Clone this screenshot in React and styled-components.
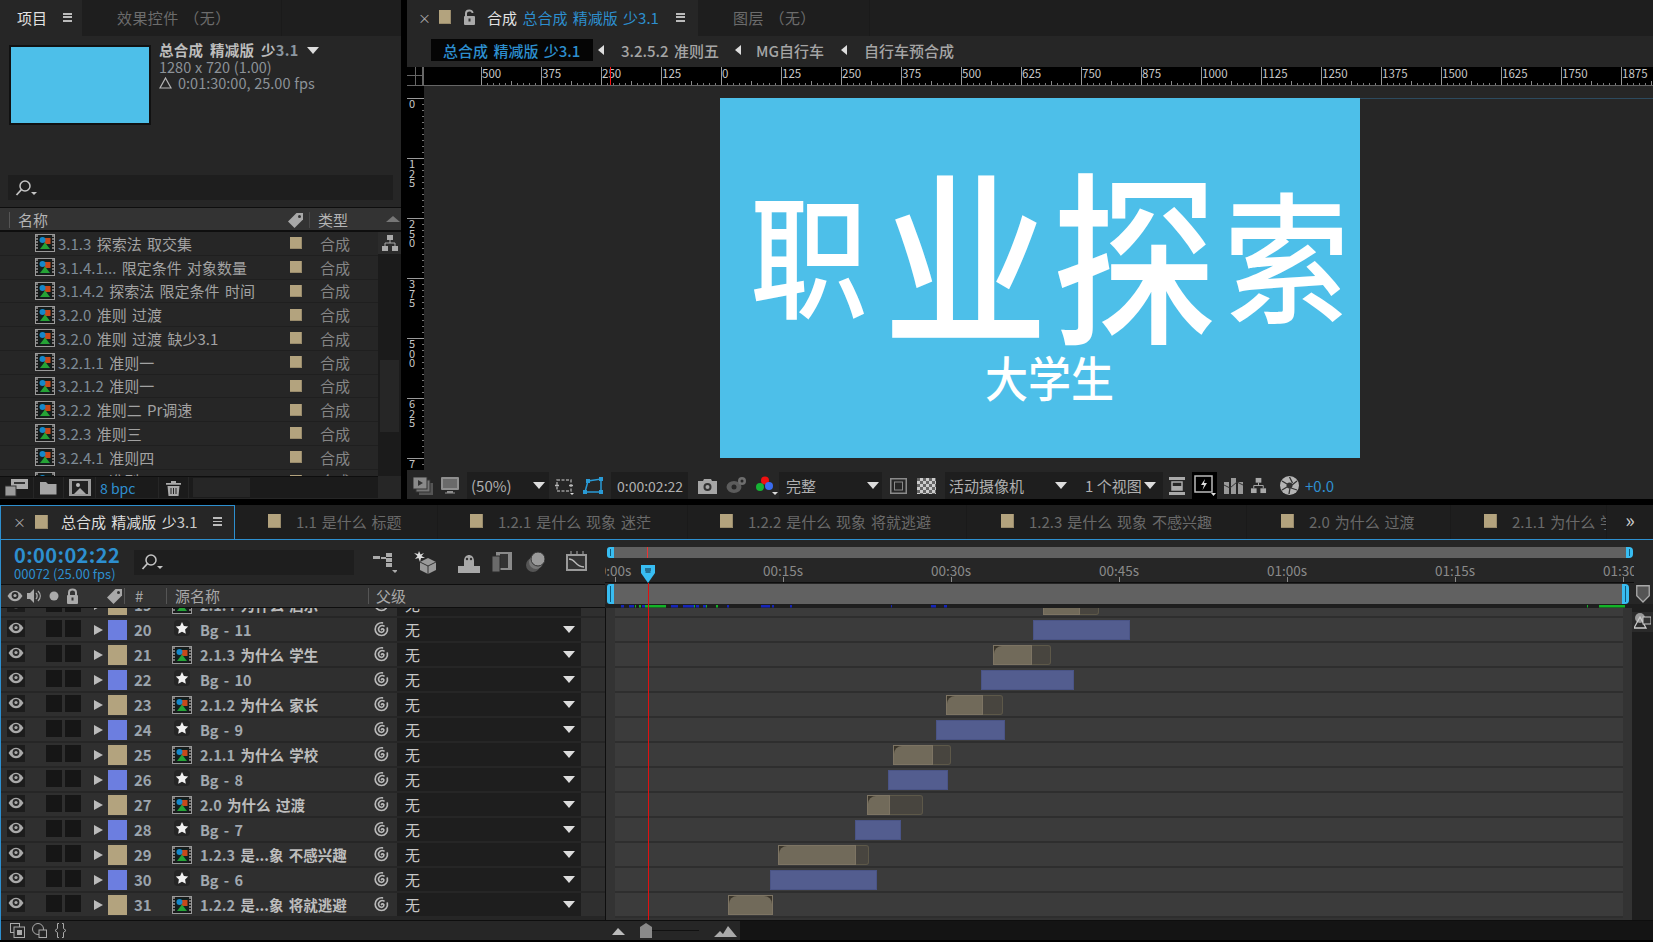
import React from 'react';
import styled, { createGlobalStyle } from 'styled-components';

const Global = createGlobalStyle`
  html, body { margin: 0; padding: 0; background: #000; }
  * { box-sizing: border-box; }
  body { font-family: "Noto Sans CJK SC", "Noto Sans", sans-serif; font-size: 15px; color: #aaa; word-spacing: 2px; }
`;

const BLUE = '#2d8fcf';
const CYAN = '#38bdf2';
const TAN = '#b3a37e';
const PERI = '#6c7ee0';

/* ---------- page ---------- */
const Page = styled.div`
  width: 1653px; height: 942px; background: #000; overflow: hidden;
  display: flex; flex-direction: column;
`;
const TopArea = styled.div`
  height: 499px; margin-bottom: 6px; display: grid; grid-template-columns: 401px 1246px; column-gap: 6px;
`;
const Panel = styled.section`
  background: #262626; height: 100%; display: flex; flex-direction: column; min-width: 0; overflow: hidden;
`;

/* ---------- tabs ---------- */
const TabStrip = styled.div`
  height: 36px; flex: none; display: flex; align-items: stretch; background: #1e1e1e; overflow: hidden;
`;
const ActiveTab = styled.div`
  width: ${p => p.$w}px; flex: none; background: #262626; display: flex; align-items: center;
  padding: 0 0 2px ${p => p.$pad}px; color: #e2e2e2; white-space: nowrap;
`;
const GhostTab = styled.div`
  flex: none; width: ${p => p.$w}px; padding: 0 0 2px ${p => p.$pad}px; display: flex; align-items: center;
  color: #6c6c6c; white-space: nowrap; border-right: 1px solid #1a1a1a; letter-spacing: .4px;
`;
const MenuIcon = styled.span`
  width: 9px; height: 9px; flex: none; margin-left: ${p => p.$ml}px;
  background: repeating-linear-gradient(180deg, #bbb 0 2px, transparent 2px 3.5px);
`;
const Swatch = styled.span`
  display: block; flex: none; width: ${p => p.$w || 12}px; height: ${p => p.$h || 12}px; background: ${p => p.$c || TAN};
  box-shadow: inset -1px -1px 0 rgba(0,0,0,.15);
`;
const Blue = styled.span` color: ${BLUE}; `;
const CloseX = styled.span` color: #aaa; font-size: 13px; width: ${p => p.$w}px; flex: none; `;

/* ---------- project panel ---------- */
const Info = styled.div`
  height: 139px; flex: none; display: flex; padding: 9px 0 0 9px;
`;
const Thumb = styled.div`
  width: 142px; height: 80px; background: #4dbfe9; border: 2px solid #111; flex: none;
`;
const Meta = styled.div`
  margin-left: 8px; font-size: 14.5px; line-height: 16.5px; color: #8c9298; margin-top: -3px; word-spacing: .5px;
`;
const MetaTitle = styled.div`
  font-weight: 700; color: #bdbdbd; display: flex; align-items: center; gap: 8px; white-space: nowrap; word-spacing: 3px; letter-spacing: .3px;
`;
const MetaLine = styled.div` display: flex; align-items: center; gap: 6px; white-space: nowrap; `;
const SearchBox = styled.div`
  width: ${p => p.$w}px; height: ${p => p.$h}px; margin-left: ${p => p.$ml}px; background: #1e1e1e; flex: none;
  display: flex; align-items: center; padding-left: 7px;
`;
const ProjectHeader = styled.div`
  margin-top: 7px; height: 25px; flex: none; background: #333; border-top: 1px solid #0e0e0e; border-bottom: 2px solid #0e0e0e;
  display: flex; align-items: center; color: #b4b4b4; position: relative; padding-top: 1px;
`;
const HeadName = styled.span` margin-left: 9px; padding-left: 8px; width: 278px; flex: none; border-left: 1px solid #555; line-height: 16px; `;
const HeadType = styled.span` margin-left: 5px; padding-left: 8px; border-left: 1px solid #484848; line-height: 16px; `;
const SortCaret = styled.span`
  position: absolute; right: 1px; top: 8px; width: 0; height: 0;
  border-left: 7px solid transparent; border-right: 7px solid transparent; border-bottom: 6px solid #777;
`;
const ProjectBody = styled.div` height: 244px; flex: none; display: flex; overflow: hidden; `;
const ProjectList = styled.div` width: 378px; flex: none; overflow: hidden; `;
const ProjectRow = styled.div`
  height: 23.75px; display: flex; align-items: center; padding-left: 35px; border-bottom: 1px solid #1f1f1f;
  color: #a2a2a2; white-space: nowrap; overflow: hidden;
`;
const ProjectName = styled.span` width: 232px; flex: none; margin-left: 3px; `;
const Latin = styled.span` color: ${p => p.$c || '#7f8b96'}; `;
const TypeText = styled.span` margin-left: 18px; color: #858585; `;
const Rail = styled.div`
  width: 23px; flex: none; background: #1b1b1b; display: flex; flex-direction: column; align-items: center;
`;
const RailTop = styled.div` width: 100%; height: 22px; background: #2b2b2b; display: flex; justify-content: center; align-items: center; `;
const Thumbbar = styled.div` width: 19px; height: 72px; background: #262626; margin-top: 106px; `;
const ProjectBar = styled.div`
  height: 22px; flex: none; display: flex; align-items: center; background: #262626;
`;
const ProjectTools = styled.div`
  width: 378px; height: 100%; background: #1b1b1b; display: flex; align-items: center; border-top: 1px solid #0e0e0e;
`;
const ToolSlot = styled.div`
  flex: none; height: 100%; width: ${p => p.$w}px; display: flex; align-items: center; justify-content: center;
  border-right: 1px solid #262626;
`;
const BpcSlot = styled.div`
  flex: none; height: 100%; width: 63px; display: flex; align-items: center; padding-left: 4px;
  border-right: 1px solid #262626; color: #2f8fd0; white-space: nowrap; font-size: 14px; word-spacing: 0;
`;
const FieldBox = styled.div` width: 57px; height: 19px; margin-left: 4px; background: #262626; `;

/* ---------- viewer ---------- */
const Crumbs = styled.div`
  height: 30px; flex: none; display: flex; align-items: center; color: #a5a5a5; white-space: nowrap; font-weight: 500;
  padding-bottom: 2px;
`;
const CrumbActive = styled.div`
  width: 162px; height: 22px; margin-left: 24px; background: #050505; color: ${BLUE}; display: flex; align-items: center;
  padding-left: 12px;
`;
const CrumbArrow = styled.span`
  width: 0; height: 0; flex: none; margin-left: ${p => p.$ml}px;
  border-top: 5px solid transparent; border-bottom: 5px solid transparent; border-right: 6px solid #ddd;
`;
const CrumbText = styled.span` margin-left: ${p => p.$ml}px; `;
const TopRuler = styled.div`
  height: 19px; margin-top: 1px; flex: none; background: #000; display: flex; position: relative;
  border-bottom: 1px solid #666; overflow: hidden;
`;
const RulerCorner = styled.div`
  width: 17px; flex: none; border-right: 2px solid #666; position: relative; margin-right: 57px;
  background: linear-gradient(#666,#666) 0 8px/100% 1px no-repeat, linear-gradient(#666,#666) 8px 0/1px 100% no-repeat;
`;
const RulerCell = styled.div`
  width: 60px; flex: none; border-left: 1px solid #999; font-size: 11.5px; line-height: 12px; color: #c8c8c8;
  background:
    linear-gradient(#888,#888) 29px 100%/1px 4px no-repeat,
    repeating-linear-gradient(90deg, #777 0 1px, transparent 1px 6px) 5px 100%/100% 2px no-repeat;
`;
const RedMark = styled.i` position: absolute; left: 203px; top: 0; width: 1px; height: 19px; background: #f11; `;
const Stage = styled.div` height: 384px; flex: none; display: flex; border-bottom: 0; `;
const SideRuler = styled.div`
  width: 17px; flex: none; background: #000; padding-top: 12px; overflow: hidden;
`;
const SideCell = styled.div`
  height: 60px; border-top: 1px solid #999; font-size: 11px; line-height: 9.5px; color: #c8c8c8; padding: 0 0 0 2px; width: 100%;
  background: repeating-linear-gradient(180deg, #777 0 1px, transparent 1px 6px) 100% 5px/2px 100% no-repeat;
  word-break: break-all; white-space: pre-line;
`;
const CanvasArea = styled.div` flex: 1; padding: 12px 0 0 296px; overflow: hidden; background: #262626; `;
const Preview = styled.div`
  width: 640px; height: 360px; background: #4dbfe9; color: #fff; display: flex; flex-direction: column; align-items: center;
  position: relative;
  &::after { content: ""; position: absolute; left: 100%; top: 0; width: 300px; height: 1px; background: #2d4a5e; }
`;
const TitleRow = styled.div`
  align-self: stretch; display: flex; align-items: center; margin-top: 62px; height: 180px; padding-left: 30px; line-height: 1;
`;
const TitleChar = styled.span`
  display: block; flex: none; font-size: ${p => p.$s}px; margin-left: ${p => p.$ml || 0}px; font-weight: 500; transform: scaleY(1.13);
`;
const Subtitle = styled.div` font-size: 43px; line-height: 1; font-weight: 500; margin: 15px 0 0 19px; transform: scaleY(1.1); `;
const ViewerBar = styled.div`
  height: 27px; margin-top: 2px; flex: none; display: flex; align-items: center; background: #262626; color: #b0b0b0; white-space: nowrap;
  word-spacing: 0;
`;
const VSeg = styled.div`
  flex: none; width: ${p => p.$w}px; height: 100%; display: flex; align-items: center; padding-left: ${p => p.$pad || 0}px;
  background: ${p => p.$dark ? '#1e1e1e' : 'transparent'}; color: ${p => p.$c || 'inherit'}; position: relative;
  gap: ${p => p.$gap || 0}px; font-size: ${p => p.$fs || 15}px;
`;
const Caret = styled.span`
  width: 0; height: 0; flex: none; margin-left: ${p => p.$ml || 0}px;
  border-left: 6px solid transparent; border-right: 6px solid transparent; border-top: 7px solid #ddd;
`;

/* ---------- composition panel ---------- */
const TimelinePanel = styled.section`
  height: 435px; flex: none; background: #262626; border-left: 1px solid ${BLUE}; border-bottom: 1px solid ${BLUE};
  display: flex; flex-direction: column;
`;
const BottomTabs = styled.div`
  height: 35px; flex: none; display: flex; background: #1e1e1e; overflow: hidden; position: relative; border-bottom: 1px solid ${BLUE};
`;
const BTabActive = styled.div`
  width: 234px; flex: none; height: 35px; background: #262626; border: 1px solid ${BLUE}; border-left: 0; border-bottom: 1px solid #262626;
  display: flex; align-items: center; padding: 0 0 2px 12px; color: #dcdcdc; white-space: nowrap;
`;
const BTabName = styled.span` margin-left: 13px; `;
const BTab = styled.div`
  flex: none; width: ${p => p.$w}px; display: flex; align-items: center; padding: 0 0 2px ${p => p.$pad}px; color: #6a6a6a; white-space: nowrap;
  border-right: 1px solid #1a1a1a; overflow: hidden; word-spacing: 1.5px;
`;
const BTabLabel = styled.span` margin-left: 15px; `;
const BTabMore = styled.div` flex: 1; display: flex; align-items: center; justify-content: center; color: #ccc; font-size: 20px; line-height: 1; padding-bottom: 4px; `;
const TimelineGrid = styled.div`
  height: 380px; flex: none; display: grid; grid-template-columns: 604px 1048px;
`;
const LeftCol = styled.div` display: flex; flex-direction: column; overflow: hidden; `;
const Controls = styled.div`
  height: 44px; flex: none; display: flex; align-items: center; position: relative; padding-left: 13px;
`;
const TimeBlock = styled.div` width: 120px; flex: none; color: ${BLUE}; word-spacing: 0; `;
const BigTime = styled.div` font-size: 20px; line-height: 23px; font-weight: 700; letter-spacing: .4px; `;
const SmallTime = styled.div` font-size: 13px; line-height: 15px; `;
const ControlIcons = styled.div` display: flex; align-items: center; margin-left: 19px; `;
const CtlIcon = styled.span` display: block; flex: none; margin-left: ${p => p.$ml}px; height: 24px; `;
const HeaderRow = styled.div`
  height: 24px; flex: none; background: #333; border-top: 1px solid #0e0e0e; border-bottom: 1px solid #0e0e0e;
  display: flex; align-items: center; color: #a8a8a8; white-space: nowrap;
`;
const HeadIcon = styled.span` display: flex; flex: none; margin-left: ${p => p.$ml}px; `;
const HeadLabel = styled.span`
  flex: none; margin-left: ${p => p.$ml}px; width: ${p => p.$w}px; padding-left: ${p => p.$pad}px;
  border-left: 1px solid #555; line-height: 16px;
`;
const Viewport = styled.div` height: 312px; flex: none; overflow: hidden; `;
const LayerStack = styled.div` margin-top: -15px; `;
const LayerRow = styled.div`
  height: 25px; display: flex; align-items: center; background: #2f2f2f; border-bottom: 2px solid #262626; white-space: nowrap;
`;
const EyeBox = styled.span` width: 18px; height: 17px; margin-left: 6px; flex: none; background: #1c1c1c; display: flex; align-items: center; justify-content: center; margin-top: -3px; `;
const SwitchBox = styled.span` width: 16px; height: 17px; flex: none; margin-left: ${p => p.$ml}px; background: #161616; margin-top: -3px; `;
const TwirlArrow = styled.span`
  width: 0; height: 0; flex: none; margin-left: 13px;
  border-top: 5px solid transparent; border-bottom: 5px solid transparent; border-left: 9px solid #bbb;
`;
const LayerLabel = styled.span` width: 19px; height: 20px; flex: none; margin-left: 5px; background: ${p => p.$c}; `;
const LayerNum = styled.span` width: 38px; flex: none; margin-left: 7px; font-weight: 700; color: #9ba4ad; `;
const LayerIcon = styled.span` width: 20px; flex: none; display: flex; justify-content: center; `;
const LayerName = styled.span` width: 174px; flex: none; margin-left: 8px; font-weight: 700; color: #bdbdbd; font-size: 14.5px; `;
const ParentSelect = styled.div`
  width: 184px; height: 23px; flex: none; margin-left: 8px; background: #1e1e1e; display: flex; align-items: center; padding: 0 6px 0 8px;
  color: #c8c8c8; justify-content: space-between; margin-top: 0;
`;

/* ---------- right side: time graph ---------- */
const RightCol = styled.div` position: relative; display: flex; flex-direction: column; overflow: hidden; `;
const NavRow = styled.div` height: 18px; flex: none; padding: 7px 20px 0 2px; display: flex; `;
const NavHandle = styled.span`
  width: ${p => p.$w}px; height: 100%; flex: none; border-radius: ${p => p.$r};
  background: linear-gradient(#0d5a7d,#0d5a7d) 3px 2px/1px calc(100% - 4px) no-repeat, ${CYAN};
`;
const NavBar = styled.div` flex: 1; background: #616161; position: relative; `;
const NavRed = styled.i` position: absolute; left: 33px; top: 0; width: 1px; height: 100%; background: #e33; `;
const TimeRuler = styled.div`
  height: 25px; flex: none; position: relative; padding-left: 0; display: flex; color: #8a8a8a; font-size: 13.5px; margin-right: 19px;
  border-bottom: 1px solid #0e0e0e; overflow: hidden; word-spacing: 0;
`;
const TimeCell = styled.div`
  flex: none; width: 168px; margin-left: ${p => p.$ml || 0}px; text-align: center; line-height: 18px; padding-top: 3px; position: relative; white-space: nowrap;
  &::after { content: ""; position: absolute; left: 50%; bottom: 0; width: 1px; height: 5px; background: #888; }
`;
const WorkRow = styled.div` height: 21px; flex: none; display: flex; padding: 1px 0 0 2px; `;
const WorkBar = styled.div` width: 1012px; background: #616161; margin-left: 0; `;
const ShieldSlot = styled.div` width: 20px; flex: none; display: flex; justify-content: center; margin-left: 4px; `;
const StripSvg = styled.svg` display: block; flex: none; `;
const Tracks = styled.div` height: 312px; flex: none; display: flex; overflow: hidden; `;
const TrackColumn = styled.div` width: 1027px; flex: none; background: #333; overflow: hidden; padding-left: 9px; padding-right: 9px; border-left: 1px solid #0e0e0e; `;
const TrackStack = styled.div` margin-top: -15px; background: #3b3b3b; `;
const TrackRow = styled.div`
  height: 25px; display: flex; padding-top: 2px; border-bottom: 2px solid #2e2e2e; overflow: hidden;
`;
const BlueClip = styled.div`
  height: 20px; background: #535d8f; border: 1px solid #4a5486; flex: none;
`;
const TanWrap = styled.div` height: 20px; flex: none; display: flex; `;
const TanClip = styled.div`
  background: #3a352b; height: 100%; flex: none; border: 1px solid #7d7463; overflow: hidden;
`;
const TanFill = styled.div`
  width: 100%; height: 100%; background: #716a5a; border-radius: ${p => p.$both ? '8px 8px 0 0' : '8px 0 0 0'};
`;
const TanRest = styled.div`
  background: #48453f; height: 100%; border: 1px solid #5d5849; border-left: 0; border-radius: 0 3px 3px 0; flex: none;
`;
const RightRail = styled.div` width: 21px; flex: none; background: #1e1e1e; display: flex; flex-direction: column; align-items: center; `;
const RailIcon = styled.div` width: 100%; height: 20px; background: #2a2a2a; margin-top: 4px; display: flex; justify-content: center; `;
const Playhead = styled.div`
  position: absolute; left: 36px; top: 25px; width: 14px; height: 18px; display: block;
`;
const RedLine = styled.i` position: absolute; left: 42.5px; top: 43px; bottom: 0; width: 1px; background: #e01010; `;
const BottomBar = styled.div` height: 20px; flex: none; display: flex; align-items: center; background: #262626; border-top: 1px solid #0e0e0e; `;
const BottomLeft = styled.div` width: 604px; flex: none; display: flex; align-items: center; padding-left: 9px; gap: 7px; `;
const ZoomArea = styled.div` width: 135px; flex: none; display: flex; align-items: center; height: 100%; padding-left: 7px; `;
const ZoomLine = styled.span` width: 47px; height: 1px; background: #111; flex: none; `;
const BottomRest = styled.div` flex: 1; height: 100%; background: #141414; `;
const Spacer = styled.span` width: ${p => p.$w}px; flex: none; `;
const TabTitle = styled.span` margin-left: ${p => p.$ml}px; `;

/* ---------- icons ---------- */
const Comp = ({ w = 20, h = 18 }) => (
  <svg width={w} height={h} viewBox="0 0 20 18" style={{ flex: 'none', display: 'block' }}>
    <rect x=".5" y=".5" width="19" height="17" fill="#1a1a1a" stroke="#9a9a9a" />
    <path d="M1 2h2M1 5h2M1 8h2M1 11h2M1 14h2M17 2h2M17 5h2M17 8h2M17 11h2M17 14h2" stroke="#9a9a9a" strokeWidth="1.3" />
    <rect x="4" y="2" width="12" height="14" fill="#12201f" />
    <rect x="9.5" y="4" width="6" height="6" fill="#c8491a" />
    <circle cx="7.5" cy="6" r="3" fill="#1687c9" />
    <path d="M10 8.5l5 6.5H5z" fill="#25a335" />
  </svg>
);
const Star = () => (
  <svg width="16" height="16" viewBox="0 0 16 16" style={{ display: 'block', marginTop: -3 }}>
    <rect width="16" height="16" fill="#1f1f1f" rx="4" opacity=".7" />
    <path d="M8 2l1.9 3.9 4.3.6-3.1 3 .7 4.3L8 11.8l-3.8 2 .7-4.3-3.1-3 4.3-.6z" fill="#f0f0f0" />
  </svg>
);
const Eye = ({ c = '#aaa' }) => (
  <svg width="16" height="12" viewBox="0 0 16 12" style={{ display: 'block' }}>
    <path d="M.5 6C3 2 5.5.7 8 .7S13 2 15.5 6C13 10 10.5 11.3 8 11.3S3 10 .5 6z" fill={c} />
    <circle cx="8" cy="5.5" r="3.4" fill="#2a2a2a" />
    <circle cx="8" cy="5.5" r="1.6" fill={c} />
  </svg>
);
const Spiral = () => (
  <svg width="15" height="16" viewBox="0 0 15 16" style={{ flex: 'none', marginLeft: 0, display: 'block', marginTop: -2 }}>
    <path d="M7.5 8.5c.9-1.5 3-.3 2.2 1.5-.9 2-4.4 1.7-5.1-.9-.8-3 2.6-5.5 5.4-4.2M13.3 7c.9 3.9-2 7.5-5.9 7.5-3.5 0-6.2-2.800-6.2-6.300C1.200 4.300 4.500 1.400 8.400 1.800" fill="none" stroke="#b9b9b9" strokeWidth="1.7" strokeLinecap="round" />
  </svg>
);
const Search = () => (
  <svg width="22" height="18" viewBox="0 0 22 18" style={{ display: 'block' }}>
    <circle cx="10" cy="7" r="5" fill="none" stroke="#c4c4c4" strokeWidth="1.5" />
    <path d="M6.500 10.500L1.500 16" stroke="#c4c4c4" strokeWidth="1.8" />
    <path d="M16 13h6l-3 3z" fill="#c4c4c4" />
  </svg>
);
const TagIcon = () => (
  <svg width="17" height="16" viewBox="0 0 17 16" style={{ display: 'block' }}>
    <path d="M1 9.500L9.500 1H16v6.500L7.500 16z" fill="#a8a8a8" />
    <circle cx="12.500" cy="4.500" r="1.500" fill="#333" />
  </svg>
);
const Tree = ({ s = 18, c = '#aaa' }) => (
  <svg width={s} height={s} viewBox="0 0 18 18" style={{ display: 'block' }}>
    <rect x="6" y="1" width="6" height="5" fill={c} />
    <rect x="1" y="12" width="6" height="5" fill={c} />
    <rect x="11" y="12" width="6" height="5" fill={c} />
    <path d="M9 6v3M4 12V9h10v3" stroke={c} fill="none" />
  </svg>
);
const NewComp = () => (
  <svg width="23" height="19" viewBox="0 0 23 19"><rect x="6" y="1" width="17" height="10" fill="#aaa" /><rect x="9" y="4" width="11" height="2" fill="#333" /><rect x="0" y="8" width="11" height="10" fill="#9a9a9a" stroke="#333" /></svg>
);
const Folder = () => (
  <svg width="17" height="15" viewBox="0 0 17 15"><path d="M0 2h6l2 2h8.500v10.500H0z" fill="#a5a5a5" /></svg>
);
const FilmPic = () => (
  <svg width="22" height="17" viewBox="0 0 22 17"><rect width="22" height="17" fill="#999" /><rect x="3" y="2" width="16" height="13" fill="#222" /><circle cx="9" cy="6" r="2" fill="#bbb" /><path d="M5 15l6-6 6 6z" fill="#aaa" /></svg>
);
const Trash = () => (
  <svg width="15" height="16" viewBox="0 0 15 16"><path d="M5 1h5v2h5v1.800H0V3h5zM1.500 6h12L12.500 16h-10z" fill="#aaa" /><path d="M5 8v6M7.500 8v6M10 8v6" stroke="#222" /></svg>
);
const Lock = ({ open, c = '#aaa' }) => (
  <svg width="13" height="16" viewBox="0 0 13 16" style={{ display: 'block', flex: 'none' }}>
    <path d={open ? 'M3 8V4.500C3 .5 9.500 .5 9.500 4' : 'M3 8V4.500C3 .5 10 .5 10 4.500V8'} fill="none" stroke={c} strokeWidth="2" />
    <rect x="1" y="7" width="11" height="9" fill={c} rx="1" />
    <rect x="5.500" y="9.500" width="2" height="3" fill="#333" />
  </svg>
);
const Stack = () => (
  <svg width="20" height="18" viewBox="0 0 20 18"><rect x="6" y="6" width="14" height="12" fill="#555" /><rect x="3" y="3" width="14" height="12" fill="#777" stroke="#333" /><rect x="0" y="0" width="14" height="12" fill="#8a8a8a" stroke="#333" /><path d="M5 3l5 3-5 3z" fill="#333" /></svg>
);
const Monitor = () => (
  <svg width="18" height="17" viewBox="0 0 18 17"><rect width="18" height="13" fill="#8f8f8f" rx="1" /><rect x="2" y="2" width="14" height="9" fill="#6a6a6a" /><path d="M6 14h6v1.500h2v1H4v-1h2z" fill="#8f8f8f" /></svg>
);
const Region = () => (
  <svg width="20" height="18" viewBox="0 0 20 18"><path d="M2 3h14v11H2z" fill="none" stroke="#999" strokeWidth="1.500" strokeDasharray="3 1.500" /><path d="M0 8.500h4M14 8.500h4" stroke="#bbb" strokeWidth="1.500" /><path d="M15 16h4l-2 2z" fill="#ddd" /></svg>
);
const MaskPath = () => (
  <svg width="20" height="18" viewBox="0 0 20 18"><path d="M2 15L5 4l13-2v13z" fill="none" stroke="#2a9bd6" strokeWidth="1.500" /><g fill="#2a9bd6"><rect y="13" width="4" height="4" /><rect x="3" y="2" width="4" height="4" /><rect x="16" width="4" height="4" /><rect x="16" y="13" width="4" height="4" /></g></svg>
);
const Camera = () => (
  <svg width="19" height="16" viewBox="0 0 19 16"><path d="M0 3h5l1-2h7l1 2h5v13H0z" fill="#a6a6a6" /><circle cx="9.500" cy="9" r="4" fill="#333" /><circle cx="9.500" cy="9" r="2" fill="#a6a6a6" /></svg>
);
const Snapshot = () => (
  <svg width="21" height="17" viewBox="0 0 21 17"><ellipse cx="8" cy="10" rx="7.500" ry="6" fill="#5c5c5c" /><circle cx="8" cy="10" r="2.500" fill="#262626" /><circle cx="16" cy="4" r="4" fill="#6e6e6e" /><circle cx="16" cy="4" r="1.500" fill="#262626" /></svg>
);
const Rgb = () => (
  <svg width="22" height="20" viewBox="0 0 22 20"><circle cx="9" cy="4.500" r="4" fill="#f01010" /><circle cx="4" cy="11" r="4" fill="#16b334" /><circle cx="13" cy="10" r="4" fill="#3a6cf0" /><path d="M16 16h6l-3 3z" fill="#ddd" /></svg>
);
const BoxIcon = () => (
  <svg width="17" height="16" viewBox="0 0 17 16"><rect x=".75" y=".75" width="15.500" height="14.500" fill="none" stroke="#8a8a8a" strokeWidth="1.500" /><rect x="4.500" y="4" width="8" height="8" fill="none" stroke="#8a8a8a" /></svg>
);
const Checker = () => (
  <svg width="19" height="16" viewBox="0 0 19 16">
    <rect width="19" height="16" fill="#ccc" />
    <pattern id="ck" width="6" height="6" patternUnits="userSpaceOnUse"><rect width="3" height="3" fill="#666" /><rect x="3" y="3" width="3" height="3" fill="#666" /></pattern>
    <rect width="19" height="16" fill="url(#ck)" />
  </svg>
);
const Reset = () => (
  <svg width="16" height="20" viewBox="0 0 16 20"><rect y="1" width="16" height="3" fill="#aaa" /><rect y="16" width="16" height="3" fill="#aaa" /><path d="M3 6h10v8H3z" fill="none" stroke="#aaa" strokeWidth="1.500" /><rect x="3" y="10" width="10" height="4" fill="#aaa" /></svg>
);
const FastPreview = () => (
  <svg width="25" height="27" viewBox="0 0 25 27"><rect width="25" height="27" fill="#000" /><rect x="3" y="4" width="17" height="16" fill="none" stroke="#bbb" strokeWidth="1.500" /><path d="M13 7l-4 6h3l-1.500 5 4.500-7h-3l1-4z" fill="#ddd" /><path d="M19 21h5l-2.500 3z" fill="#ddd" /></svg>
);
const ChartBars = () => (
  <svg width="19" height="17" viewBox="0 0 19 17"><path d="M0 17V5h5v12zM7 17V1h5v16zM14 17V5h5v12z" fill="#999" /><path d="M0 8l6 3 7-6 6 3" stroke="#333" fill="none" /></svg>
);
const Aperture = () => (
  <svg width="19" height="19" viewBox="0 0 19 19"><circle cx="9.500" cy="9.500" r="9.500" fill="#b5b5b5" /><circle cx="9.500" cy="9.500" r="3" fill="#333" /><path d="M9.500 1l3 6M17 5l-5 4M17 14l-6-2M9 18l1-6M2 14l5-3M2 5l5 3" stroke="#333" strokeWidth="1.300" /></svg>
);
const FlowIcon = () => (
  <svg width="24" height="24" viewBox="0 0 24 24"><path d="M0 6h7v3H0zM8 7h5v2H8zM13 3h6v4h-6zM13 8h6v4h-6zM13 13h6v4h-6zM19 20h6l-3 3z" fill="#aaa" /></svg>
);
const Cube3D = () => (
  <svg width="24" height="24" viewBox="0 0 24 24"><path d="M14 8l8 4v8l-8 4-8-4v-8z" fill="#9a9a9a" /><path d="M6 12l8 4 8-4M14 16v8" stroke="#333" fill="none" /><path d="M5 1l1.500 3.500L10 3 7.500 6 11 8 7 8l-1 4-1.500-4L1 9l2.500-3L0 3l4 1z" fill="#ddd" /></svg>
);
const Shy = () => (
  <svg width="22" height="24" viewBox="0 0 22 24"><path d="M0 23v-7h6v-5c0-8 10-8 10 0v5h6v7z" fill="#a8a8a8" /><circle cx="9" cy="9" r="1.200" fill="#333" /><circle cx="13" cy="9" r="1.200" fill="#333" /></svg>
);
const FilmGrid = () => (
  <svg width="20" height="24" viewBox="0 0 20 24"><rect x="4" y="2" width="16" height="18" fill="#8a8a8a" /><rect x="8" y="4" width="8" height="14" fill="#333" /><rect y="6" width="8" height="16" fill="#6a6a6a" stroke="#2a2a2a" /></svg>
);
const Layers = () => (
  <svg width="20" height="24" viewBox="0 0 20 24"><circle cx="8" cy="15" r="7" fill="#555" /><circle cx="11" cy="12" r="7" fill="#777" /><circle cx="13" cy="9" r="7" fill="#9a9a9a" stroke="#333" /></svg>
);
const Graph = () => (
  <svg width="21" height="24" viewBox="0 0 21 24"><rect y="4" width="21" height="17" fill="#9a9a9a" /><rect x="2" y="6" width="17" height="13" fill="#333" /><path d="M3 9c7 0 6 8 15 8" stroke="#bbb" strokeWidth="1.500" fill="none" /><path d="M5 1v3M11 1v3M17 1v3" stroke="#aaa" /></svg>
);
const Speaker = () => (
  <svg width="14" height="14" viewBox="0 0 14 14"><path d="M0 4h3l4-4v14l-4-4H0z" fill="#aaa" /><path d="M9 4c1.500 1.500 1.500 4.500 0 6M11 2c3 3 3 7 0 10" stroke="#aaa" strokeWidth="1.300" fill="none" /></svg>
);
const Dot = () => (
  <svg width="10" height="10" viewBox="0 0 10 10"><circle cx="5" cy="5" r="4.500" fill="#aaa" /></svg>
);
const PlayheadShape = () => (
  <Playhead as="svg" viewBox="0 0 14 18">
    <path d="M0 0h14v8l-7 10-7-10z" fill={CYAN} />
    <path d="M5 3v3M7 3v3M9 3v3M4.500 7h5" stroke="#123" />
  </Playhead>
);
const Shield = () => (
  <svg width="14" height="18" viewBox="0 0 14 18" style={{ marginTop: 1 }}><path d="M.75.75h12.500v10L7 17 .75 10.750z" fill="#555" stroke="#aaa" strokeWidth="1.300" /></svg>
);
const Comp3D = () => (
  <svg width="17" height="16" viewBox="0 0 17 16" style={{ marginTop: 1 }}><circle cx="6" cy="5" r="5" fill="#999" /><path d="M6 4l6 11H0z" fill="none" stroke="#ccc" strokeWidth="1.300" /><rect x="9" y="4" width="8" height="7" fill="#333" stroke="#ccc" /></svg>
);
const ComposeA = () => (
  <svg width="15" height="15" viewBox="0 0 15 15"><rect x=".5" y=".5" width="9" height="9" fill="none" stroke="#aaa" /><rect x="4" y="4" width="10.500" height="10.500" fill="#262626" stroke="#aaa" /><rect x="7" y="7" width="5" height="5" fill="#aaa" /></svg>
);
const ComposeB = () => (
  <svg width="15" height="15" viewBox="0 0 15 15"><circle cx="6" cy="6" r="5.500" fill="none" stroke="#aaa" /><rect x="7" y="7" width="7.500" height="7.500" fill="#262626" stroke="#aaa" /></svg>
);
const Braces = () => (
  <svg width="13" height="15" viewBox="0 0 13 15"><path d="M5 .5H3.500v5L1 7.500l2.500 2v5H5M8 .5h1.500v5L12 7.500l-2.500 2v5H8" fill="none" stroke="#aaa" /></svg>
);
const MountainS = () => (
  <svg width="13" height="8" viewBox="0 0 13 8" style={{ flex: 'none' }}><path d="M0 8l6-7 7 7z" fill="#bbb" /></svg>
);
const MountainL = () => (
  <svg width="23" height="12" viewBox="0 0 23 12" style={{ flex: 'none', marginLeft: 15 }}><path d="M0 12l6-6 3 3 5-8 9 11z" fill="#aaa" /></svg>
);
const SliderThumb = () => (
  <svg width="12" height="15" viewBox="0 0 12 15" style={{ flex: 'none', marginLeft: 15 }}><path d="M0 4l6-4 6 4v11H0z" fill="#8a8a8a" /></svg>
);

/* ---------- data ---------- */
const projectItems = [
  ['3.1.3', ' 探索法 取交集'],
  ['3.1.4.1...', ' 限定条件 对象数量'],
  ['3.1.4.2', ' 探索法 限定条件 时间'],
  ['3.2.0', ' 准则 过渡'],
  ['3.2.0', ' 准则 过渡 缺少3.1'],
  ['3.2.1.1', ' 准则一'],
  ['3.2.1.2', ' 准则一'],
  ['3.2.2', ' 准则二 Pr调速'],
  ['3.2.3', ' 准则三'],
  ['3.2.4.1', ' 准则四'],
  ['3.2.4.2', ' 准则四'],
];

const layers = [
  { n: 19, comp: true, id: '2.1.4', zh: ' 为什么 启示', x: 1043, mid: 1080, end: 1099 },
  { n: 20, id: 'Bg - 11', x: 1033, end: 1130 },
  { n: 21, comp: true, id: '2.1.3', zh: ' 为什么 学生', x: 993, mid: 1032, end: 1051 },
  { n: 22, id: 'Bg - 10', x: 981, end: 1074 },
  { n: 23, comp: true, id: '2.1.2', zh: ' 为什么 家长', x: 946, mid: 983, end: 1003 },
  { n: 24, id: 'Bg - 9', x: 936, end: 1005 },
  { n: 25, comp: true, id: '2.1.1', zh: ' 为什么 学校', x: 893, mid: 933, end: 951 },
  { n: 26, id: 'Bg - 8', x: 888, end: 948 },
  { n: 27, comp: true, id: '2.0', zh: ' 为什么 过渡', x: 867, mid: 890, end: 923 },
  { n: 28, id: 'Bg - 7', x: 855, end: 901 },
  { n: 29, comp: true, id: '1.2.3', zh: ' 是...象 不感兴趣', x: 778, mid: 856, end: 869 },
  { n: 30, id: 'Bg - 6', x: 770, end: 877 },
  { n: 31, comp: true, id: '1.2.2', zh: ' 是...象 将就逃避', x: 728, mid: 773, end: 773 },
];

const viewTicks = [500, 375, 250, 125, 0, 125, 250, 375, 500, 625, 750, 875, 1000, 1125, 1250, 1375, 1500, 1625, 1750, 1875, 2000];
const sideTicks = ['0', '1\n2\n5', '2\n5\n0', '3\n7\n5', '5\n0\n0', '6\n2\n5', '7'];
const times = ['00:15s', '00:30s', '00:45s', '01:00s', '01:15s', '01:30s'];
const strip = [
  [621, 3, 'b'], [629, 5, 'b'], [635, 1, 'g'], [639, 2, 'g'], [642, 3, 'b'], [645, 21, 'g'], [671, 7, 'b'],
  [683, 11, 'b'], [694, 1, 'g'], [696, 3, 'b'], [703, 3, 'b'], [706, 1, 'g'], [716, 2, 'g'], [727, 2, 'b'],
  [761, 9, 'b'], [772, 2, 'b'], [790, 2, 'b'], [891, 1, 'b'], [931, 5, 'b'], [944, 3, 'b'], [1587, 1, 'g'], [1599, 26, 'g'],
];
const tabs = [
  { w: 203, pad: 33, t: '1.1 是什么 标题' },
  { w: 250, pad: 32, t: '1.2.1 是什么 现象 迷茫' },
  { w: 279, pad: 32, t: '1.2.2 是什么 现象 将就逃避' },
  { w: 280, pad: 34, t: '1.2.3 是什么 现象 不感兴趣' },
  { w: 204, pad: 34, t: '2.0 为什么 过渡' },
  { w: 156, pad: 33, t: '2.1.1 为什么 学' },
];

const TRACK_X = 615;

export default function App() {
  return (
    <Page>
      <Global />
      <TopArea>
        <Panel>
          <TabStrip>
            <ActiveTab $w={82} $pad={17}>项目<MenuIcon $ml={16} /></ActiveTab>
            <GhostTab $w={200} $pad={35}>效果控件 （无）</GhostTab>
          </TabStrip>
          <Info>
            <Thumb />
            <Meta>
              <MetaTitle>
                <span>总合成 精减版 少<Latin $c="#8b96a0">3.1</Latin></span>
                <Caret />
              </MetaTitle>
              <MetaLine>1280 x 720 (1.00)</MetaLine>
              <MetaLine>
                <svg width="13" height="12" viewBox="0 0 13 12"><path d="M6.500 1L12 11H1z" fill="none" stroke="#b5b5b5" strokeWidth="1.200" /></svg>
                0:01:30:00, 25.00 fps
              </MetaLine>
            </Meta>
          </Info>
          <SearchBox $w={385} $h={25} $ml={8}><Search /></SearchBox>
          <ProjectHeader>
            <HeadName>名称</HeadName>
            <TagIcon />
            <HeadType>类型</HeadType>
            <SortCaret />
          </ProjectHeader>
          <ProjectBody>
            <ProjectList>
              {projectItems.map((r, i) => (
                <ProjectRow key={i}>
                  <Comp />
                  <ProjectName><Latin>{r[0]}</Latin>{r[1]}</ProjectName>
                  <Swatch />
                  <TypeText>合成</TypeText>
                </ProjectRow>
              ))}
            </ProjectList>
            <Rail>
              <RailTop><Tree /></RailTop>
              <Thumbbar />
            </Rail>
          </ProjectBody>
          <ProjectBar>
            <ProjectTools>
              <ToolSlot $w={34}><NewComp /></ToolSlot>
              <ToolSlot $w={30}><Folder /></ToolSlot>
              <ToolSlot $w={32}><FilmPic /></ToolSlot>
              <BpcSlot>8 bpc</BpcSlot>
              <ToolSlot $w={30}><Trash /></ToolSlot>
              <FieldBox />
            </ProjectTools>
          </ProjectBar>
        </Panel>

        <Panel>
          <TabStrip>
            <ActiveTab $w={291} $pad={11}>
              <CloseX $w={21}>×</CloseX>
              <Swatch $w={12} $h={14} />
              <Spacer $w={12} />
              <Lock open />
              <TabTitle $ml={11}>合成 <Blue>总合成 精减版 少3.1</Blue></TabTitle>
              <MenuIcon $ml={17} />
            </ActiveTab>
            <GhostTab $w={172} $pad={35}>图层 （无）</GhostTab>
          </TabStrip>
          <Crumbs>
            <CrumbActive>总合成 精减版 少3.1</CrumbActive>
            <CrumbArrow $ml={5} />
            <CrumbText $ml={17}>3.2.5.2 准则五</CrumbText>
            <CrumbArrow $ml={16} />
            <CrumbText $ml={15}>MG自行车</CrumbText>
            <CrumbArrow $ml={17} />
            <CrumbText $ml={17}>自行车预合成</CrumbText>
          </Crumbs>
          <TopRuler>
            <RulerCorner />
            {viewTicks.map((t, i) => <RulerCell key={i}>{t}</RulerCell>)}
            <RedMark />
          </TopRuler>
          <Stage>
            <SideRuler>
              {sideTicks.map((t, i) => <SideCell key={i}>{t}</SideCell>)}
            </SideRuler>
            <CanvasArea>
              <Preview>
                <TitleRow>
                  <TitleChar $s={118}>职</TitleChar>
                  <TitleChar $s={165} $ml={15}>业</TitleChar>
                  <TitleChar $s={165} $ml={4}>探</TitleChar>
                  <TitleChar $s={125} $ml={7}>索</TitleChar>
                </TitleRow>
                <Subtitle>大学生</Subtitle>
              </Preview>
            </CanvasArea>
          </Stage>
          <ViewerBar>
            <VSeg $w={60} $pad={6} $gap={8}><Stack /><Monitor /></VSeg>
            <VSeg $w={82} $pad={4} $gap={21} $dark>(50%)<Caret /></VSeg>
            <VSeg $w={62} $pad={6} $gap={8}><Region /><MaskPath /></VSeg>
            <VSeg $w={77} $pad={6} $fs={14} $dark>0:00:02:22</VSeg>
            <VSeg $w={91} $pad={10} $gap={9}><Camera /><Snapshot /><Rgb /></VSeg>
            <VSeg $w={103} $pad={7} $dark>完整<Caret $ml={51} /></VSeg>
            <VSeg $w={63} $pad={8} $gap={10}><BoxIcon /><Checker /></VSeg>
            <VSeg $w={132} $pad={4} $dark>活动摄像机<Caret $ml={31} /></VSeg>
            <VSeg $w={86} $pad={8} $dark>1 个视图<Caret $ml={2} /></VSeg>
            <VSeg $w={117} $pad={6} $gap={7}><Reset /><FastPreview /><ChartBars /><Tree s={17} /></VSeg>
            <VSeg $w={60} $pad={0} $gap={6} $c="#2f8fd0"><Aperture />+0.0</VSeg>
          </ViewerBar>
        </Panel>
      </TopArea>

      <TimelinePanel>
        <BottomTabs>
          <BTabActive>
            <CloseX $w={22}>×</CloseX><Swatch $w={13} $h={14} />
            <BTabName>总合成 精减版 少<Latin $c="#c8c8c8">3.1</Latin></BTabName>
            <MenuIcon $ml={15} />
          </BTabActive>
          {tabs.map((t, i) => (
            <BTab key={i} $w={t.w} $pad={t.pad}>
              <Swatch $w={13} $h={14} />
              <BTabLabel>{t.t}</BTabLabel>
            </BTab>
          ))}
          <BTabMore>»</BTabMore>
        </BottomTabs>
        <TimelineGrid>
          <LeftCol>
            <Controls>
              <TimeBlock>
                <BigTime>0:00:02:22</BigTime>
                <SmallTime>00072 (25.00 fps)</SmallTime>
              </TimeBlock>
              <SearchBox $w={220} $h={25} $ml={0}><Search /></SearchBox>
              <ControlIcons>
                <CtlIcon $ml={0}><FlowIcon /></CtlIcon>
                <CtlIcon $ml={17}><Cube3D /></CtlIcon>
                <CtlIcon $ml={20}><Shy /></CtlIcon>
                <CtlIcon $ml={12}><FilmGrid /></CtlIcon>
                <CtlIcon $ml={13}><Layers /></CtlIcon>
                <CtlIcon $ml={21}><Graph /></CtlIcon>
              </ControlIcons>
            </Controls>
            <HeaderRow>
              <HeadIcon $ml={6}><Eye /></HeadIcon>
              <HeadIcon $ml={4}><Speaker /></HeadIcon>
              <HeadIcon $ml={8}><Dot /></HeadIcon>
              <HeadIcon $ml={7}><Lock /></HeadIcon>
              <HeadIcon $ml={27}><TagIcon /></HeadIcon>
              <HeadLabel $ml={1} $w={40} $pad={10}>#</HeadLabel>
              <HeadLabel $ml={2} $w={202} $pad={8}>源名称</HeadLabel>
              <HeadLabel $ml={0} $w={226} $pad={7}>父级</HeadLabel>
            </HeaderRow>
            <Viewport>
              <LayerStack>
                {layers.map(l => (
                  <LayerRow key={l.n}>
                    <EyeBox><Eye /></EyeBox>
                    <SwitchBox $ml={21} />
                    <SwitchBox $ml={3} />
                    <TwirlArrow />
                    <LayerLabel $c={l.comp ? TAN : PERI} />
                    <LayerNum>{l.n}</LayerNum>
                    <LayerIcon>{l.comp ? <Comp /> : <Star />}</LayerIcon>
                    <LayerName><Latin $c="#a2a9b0">{l.id}</Latin>{l.zh}</LayerName>
                    <Spiral />
                    <ParentSelect>无<Caret /></ParentSelect>
                  </LayerRow>
                ))}
              </LayerStack>
            </Viewport>
          </LeftCol>
          <RightCol>
            <NavRow>
              <NavHandle $w={7} $r="3px 0 0 3px" />
              <NavBar><NavRed /></NavBar>
              <NavHandle $w={7} $r="0 4px 4px 0" />
            </NavRow>
            <TimeRuler>
              <TimeCell $ml={-74}>0:00s</TimeCell>
              {times.map(t => <TimeCell key={t}>{t}</TimeCell>)}
            </TimeRuler>
            <WorkRow>
              <NavHandle $w={7} $r="3px 0 0 3px" />
              <WorkBar />
              <NavHandle $w={7} $r="0 4px 4px 0" />
              <ShieldSlot><Shield /></ShieldSlot>
            </WorkRow>
            <StripSvg width="1048" height="4" viewBox="605 0 1048 4">
              <rect x="605" width="1048" height="4" fill="#1e1e1e" />
              {strip.map(([x, w, c], i) => <rect key={i} x={x} width={w} y="1" height="2.500" fill={c === 'g' ? '#12b327' : '#1424b8'} />)}
            </StripSvg>
            <Tracks>
              <TrackColumn>
                <TrackStack>
                  {layers.map(l => (
                    <TrackRow key={l.n}>
                      {l.comp ? (
                        <TanWrap style={{ marginLeft: l.x - TRACK_X }}>
                          <TanClip style={{ width: l.mid - l.x }}><TanFill $both={l.mid === l.end} /></TanClip>
                          {l.end > l.mid && <TanRest style={{ width: l.end - l.mid }} />}
                        </TanWrap>
                      ) : (
                        <BlueClip style={{ marginLeft: l.x - TRACK_X, width: l.end - l.x }} />
                      )}
                    </TrackRow>
                  ))}
                </TrackStack>
              </TrackColumn>
              <RightRail>
                <RailIcon><Comp3D /></RailIcon>
              </RightRail>
            </Tracks>
            <PlayheadShape />
            <RedLine />
          </RightCol>
        </TimelineGrid>
        <BottomBar>
          <BottomLeft>
            <ComposeA /><ComposeB /><Braces />
          </BottomLeft>
          <ZoomArea>
            <MountainS /><SliderThumb /><ZoomLine /><MountainL />
          </ZoomArea>
          <BottomRest />
        </BottomBar>
      </TimelinePanel>
    </Page>
  );
}
